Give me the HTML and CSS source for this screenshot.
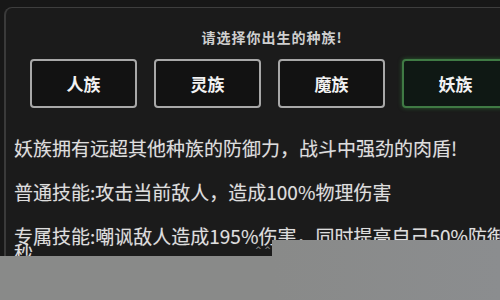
FILE: index.html
```html
<!DOCTYPE html>
<html lang="zh">
<head>
<meta charset="utf-8">
<link rel="stylesheet" href="styles.css">
</head>
<body>
<div class="panel">
  <div class="title">请选择你出生的种族!</div>
  <div class="races">
    <div class="race">人族</div>
    <div class="race">灵族</div>
    <div class="race">魔族</div>
    <div class="race active">妖族</div>
  </div>
  <div class="desc">
    <p>妖族拥有远超其他种族的防御力，战斗中强劲的肉盾!</p>
    <p>普通技能:攻击当前敌人，造成100%物理伤害</p>
    <p>专属技能:嘲讽敌人造成195%伤害，同时提高自己50%防御力，持续3秒</p>
  </div>
</div>
<div class="shade-left"></div>
<div class="shade-right"></div>
<div class="marks">^ ^</div>
</body>
</html>
```
FILE: styles.css
```css
html, body {
  margin: 0;
  padding: 0;
  width: 500px;
  height: 300px;
  overflow: hidden;
  background: #171717;
  font-family: "Noto Sans CJK SC", "Noto Sans", sans-serif;
}
.panel {
  margin: 7px 0 0 4px;
  width: 620px;
  height: 300px;
  background: #1b1b1b;
  border-top: 1px solid #3e3e3e;
  border-left: 2px solid #3a3a3a;
  border-top-left-radius: 8px;
  box-sizing: border-box;
  padding: 19px 0 0 24px;
}
.title {
  width: 484px;
  text-align: center;
  font-size: 14px;
  line-height: 20px;
  letter-spacing: 1px;
  color: #cfcfcf;
  font-weight: bold;
}
.races {
  display: flex;
  gap: 17px;
  margin-top: 12px;
}
.race {
  width: 107px;
  height: 49px;
  box-sizing: border-box;
  border: 2px solid #a8a8a8;
  border-radius: 4px;
  background: #121212;
  color: #f2f2f2;
  font-size: 17px;
  font-weight: bold;
  display: flex;
  align-items: center;
  justify-content: center;
}
.race.active {
  border-color: #3f7a44;
  background: #0f1814;
  box-shadow: 0 0 4px rgba(60, 160, 70, 0.5);
}
.desc {
  margin: 32px 0 0 -16px;
  width: 592px;
  color: #dedede;
  font-size: 19px;
  line-height: 16px;
  text-shadow: 0 0 1px rgba(255, 255, 255, 0.3);
}
.desc p {
  margin: 0 0 28px 0;
}
.shade-left {
  position: absolute;
  left: 0;
  top: 256px;
  width: 272px;
  height: 44px;
  background: #898a89;
}
.shade-right {
  position: absolute;
  left: 272px;
  top: 240px;
  width: 228px;
  height: 60px;
  background: linear-gradient(90deg, #898a89, #8b8d8f);
}
.marks {
  position: absolute;
  left: 255px;
  top: 248px;
  font-size: 8px;
  line-height: 6px;
  color: #9a9a9a;
  font-family: "DejaVu Sans", sans-serif;
}
```
